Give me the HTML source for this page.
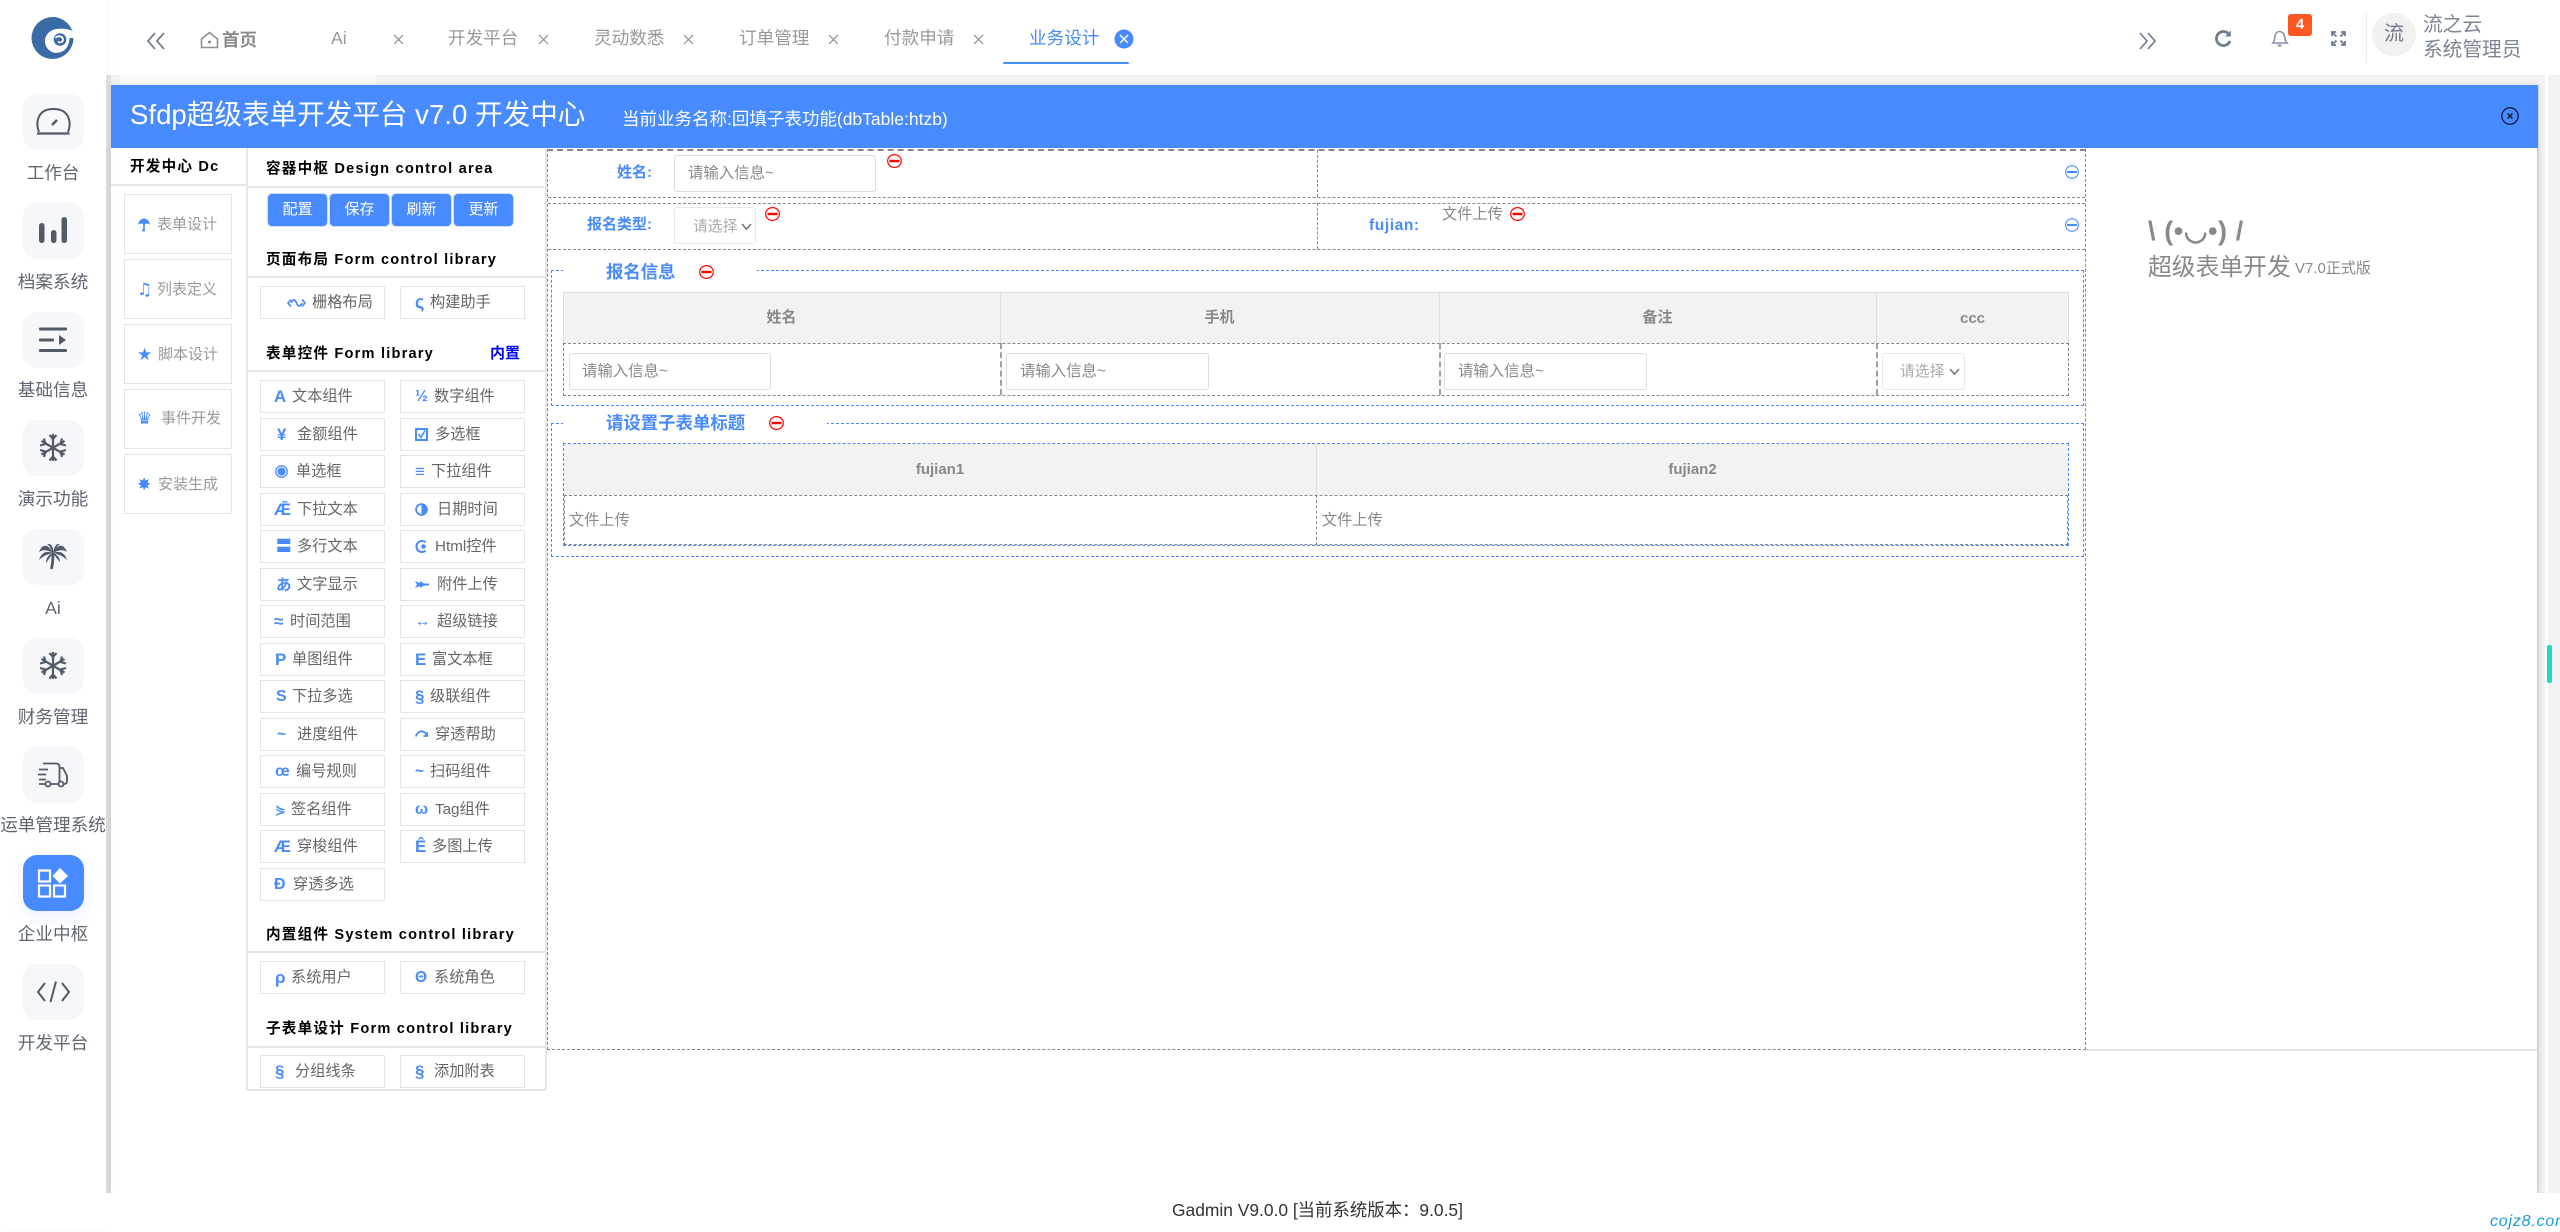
<!DOCTYPE html>
<html lang="zh-CN"><head><meta charset="utf-8"><title>Sfdp</title>
<style>
*{box-sizing:border-box;margin:0;padding:0}
html,body{width:2560px;height:1229px;overflow:hidden;background:#fff;font-family:"Liberation Sans","Noto Sans CJK SC",sans-serif}
.a,.t,.b,svg,.nb,.nl{position:absolute}
.t{white-space:nowrap;line-height:20px}
.nb{left:23px;width:61px;height:56px;border-radius:14px;background:#f5f7fb}
.nb svg{left:0;top:0}
.nl{left:0;width:106px;text-align:center;font-size:17.6px;line-height:22px;color:#5f6672;white-space:nowrap}
.tab{font-size:17.6px;color:#999;top:28px}
.x{stroke:#8a8a8a;stroke-width:1.2;fill:none}
.h{font-size:14.6px;font-weight:700;color:#000;letter-spacing:1.2px}
.l{background:#e6e6e6;height:1.5px}
.b{height:33px;width:125px;border:1px solid #e4e4e4;background:#fff;font-size:15.2px;color:#666;line-height:31px;white-space:nowrap}
.c2{left:400px}.c1{left:260px}
.b i{position:absolute;font-style:normal;font-weight:700;color:#488aff;font-size:15.5px;font-family:"Liberation Sans","DejaVu Sans",sans-serif;top:0}
.b span{position:absolute;top:0}
.s{left:124px;width:108px;height:60px;border:1px solid #e4e4e4;background:#fff}
.st{font-size:15px;color:#999}
.si{color:#488aff;font-size:17px;font-weight:700;font-family:"DejaVu Sans",sans-serif}
.btn{top:193px;width:61px;height:34px;background:#488aff;color:#fff;border:1px solid #cfdcf5;border-radius:5px;font-size:15px;text-align:center;line-height:32px}
.inp{border:1px solid #ddd;border-radius:3px;background:#fff}
.ph{font-size:15.4px;color:#888}
.sel{border:1px solid #e8e8e8;border-radius:3px;background:#fff}
.lbl{font-size:15px;font-weight:700;color:#488aff}
.dash{border:1px dashed #888}
.vd{border:0;border-left:2px dashed #a0a0a0;width:0}
.bd{border:1px dashed #488aff}
.th{background:#f2f2f2}
.tht{font-size:15px;font-weight:700;color:#888;text-align:center}
.lg{font-size:17.4px;font-weight:700;color:#488aff}
.cv{stroke:#777;stroke-width:1.6;fill:none}
.ic{fill:none;stroke:#488aff}
</style></head><body>

<!-- main background -->
<div class="a" style="left:106px;top:75px;width:2454px;height:1118px;background:#f2f2f2"></div>
<div class="a" style="left:106px;top:75px;width:5px;height:1118px;background:#e0e0e0"></div>
<div class="a" style="left:120px;top:75px;width:256px;height:10px;background:#fbfbfb"></div>
<div class="a" style="left:2545px;top:75px;width:3px;height:1118px;background:#fff"></div>
<div class="a" style="left:111px;top:85px;width:2428px;height:1108px;background:#fff;border-right:2px solid #d4d4d4;box-shadow:0 0 6px rgba(0,0,0,.1)"></div>

<!-- sidebar -->
<div class="a" style="left:0;top:0;width:106px;height:1229px;background:#fff;box-shadow:2px 0 10px rgba(0,0,0,.03)"></div>
<svg style="left:31px;top:16px" width="44" height="44" viewBox="0 0 44 44"><circle cx="21.500" cy="22" r="21" fill="#3a6ba6"/><path fill="#fff" d="M26 13C32 12 38 13 44 16V22.500L38.500 22C38.500 30 33.500 37 26 37C19 37 14 31.500 14 25C14 18.500 19.500 13.500 26 13Z"/><path fill="#3a6ba6" d="M41.800 15.600C38 7 30 1 21.500 1L30 9C34 9.500 38.500 11.500 41.800 15.600Z"/><path fill="none" stroke="#3a6ba6" stroke-width="2.600" d="M40.500 22C41 31 34 38 26 38"/><circle cx="29" cy="23.500" r="6.300" fill="#3a6ba6"/><path fill="none" stroke="#fff" stroke-width="1.700" d="M24.500 22C26 19.500 31 19.500 32 23C32.500 26 28.500 27.500 27 25.500"/></svg>

<div class="nb" style="top:94px"><svg width="61" height="56" fill="none" stroke="#515a69" stroke-width="2"><path d="M16 38C12.500 29 14 15 30.500 15C47 15 48.500 29 45 38"/><path d="M14 39.500H46.500" stroke-width="2.200"/><path d="M29 31L34 26" stroke-width="2.600"/></svg></div>
<div class="nl" style="top:162px">工作台</div>
<div class="nb" style="top:202.750px"><svg width="61" height="56" fill="#515a69"><rect x="16" y="20" width="5.500" height="20" rx="2.700"/><rect x="28" y="27" width="5.500" height="13" rx="2.700"/><rect x="38.500" y="14" width="5.500" height="26" rx="2.700"/></svg></div>
<div class="nl" style="top:271px">档案系统</div>
<div class="nb" style="top:311.500px"><svg width="61" height="56" fill="#515a69"><rect x="16" y="15.500" width="28" height="3" rx="1"/><rect x="16" y="26.500" width="15" height="3" rx="1"/><path d="M36 23L43 28L36 33Z"/><rect x="16" y="37" width="28" height="3" rx="1"/></svg></div>
<div class="nl" style="top:379px">基础信息</div>
<div class="nb" style="top:420.250px"><svg width="61" height="56" fill="none" stroke="#515a69" stroke-width="2.200"><path d="M30 14V41M18.500 21L41.500 34.500M18.500 34.500L41.500 21"/><path d="M26.500 15L30 19L33.500 15M26.500 40.500L30 36.500L33.500 40.500M17 25.500L22.500 24L21 18.500M43 30L37.500 31.500L39 37M17 30L22.500 31.500L21 37M43 25.500L37.500 24L39 18.500"/></svg></div>
<div class="nl" style="top:488px">演示功能</div>
<div class="nb" style="top:529px"><svg width="61" height="56" fill="#515a69"><path d="M30 24C25 14 19 15 16 23C20 20 25 21 30 24ZM30 24C23 21 18 24 16 31C20 27 25 25 30 24ZM30 24C31 18 28 14 24 15C27 17 28 20 30 24ZM30 24C31 18 33 14 37 15C34 17 33 20 30 24ZM30 24C35 14 41 15 44 23C40 20 35 21 30 24ZM30 24C37 21 42 24 44 31C40 27 35 25 30 24ZM30 24C26 25 23 29 23 34C26 30 28 27 30 24ZM30 24C34 25 37 29 37 33C34 30 32 27 30 24Z"/><path d="M30 24C30 30 29.500 35 28.500 40" fill="none" stroke="#515a69" stroke-width="2.800"/></svg></div>
<div class="nl" style="top:597px">Ai</div>
<div class="nb" style="top:637.750px"><svg width="61" height="56" fill="none" stroke="#515a69" stroke-width="2.200"><path d="M30 14V41M18.500 21L41.500 34.500M18.500 34.500L41.500 21"/><path d="M26.500 15L30 19L33.500 15M26.500 40.500L30 36.500L33.500 40.500M17 25.500L22.500 24L21 18.500M43 30L37.500 31.500L39 37M17 30L22.500 31.500L21 37M43 25.500L37.500 24L39 18.500"/></svg></div>
<div class="nl" style="top:706px">财务管理</div>
<div class="nb" style="top:746.500px"><svg width="61" height="56" fill="none" stroke="#515a69" stroke-width="1.800"><path d="M20 16.500H33C35.500 16.500 36.500 18 36.500 20V35M36.500 21H40L44 29V34C44 36 43 37 41 37H40M36 37H27M23 37H16M16 22.500H25M15 27.500H23M16 32.500H23"/><circle cx="25" cy="37" r="2.500"/><circle cx="38" cy="37" r="2.500"/></svg></div>
<div class="nl" style="top:814px">运单管理系统</div>
<div class="nb" style="top:855.250px;background:#488aff;box-shadow:0 6px 18px rgba(72,138,255,.12)"><svg width="61" height="56" fill="none" stroke="#fff" stroke-width="2.200"><rect x="16" y="15.500" width="11" height="11"/><rect x="16" y="30.500" width="11" height="11"/><rect x="31" y="30.500" width="11" height="11"/><path fill="#fff" stroke="none" d="M37 13L45 21L37 28.500L29.500 21Z"/></svg></div>
<div class="nl" style="top:923px">企业中枢</div>
<div class="nb" style="top:964px"><svg width="61" height="56" fill="none" stroke="#515a69" stroke-width="2"><path d="M22 19L15 28L22 37M39 19L46 28L39 37M33 17.500L27.500 38"/></svg></div>
<div class="nl" style="top:1032px">开发平台</div>

<!-- top tabs -->
<svg style="left:146px;top:31px" width="20" height="20" fill="none" stroke="#6b7789" stroke-width="1.700"><path d="M9 2L2 10L9 18M18 2L11 10L18 18"/></svg>
<svg style="left:200px;top:31px" width="19" height="18" fill="none" stroke="#8e8e8e" stroke-width="1.600"><path d="M1.500 8L9.500 1.500L17.500 8V16.500H1.500Z"/><circle cx="9.500" cy="11" r="1.500" fill="#8e8e8e" stroke="none"/></svg>
<div class="t" style="left:222px;top:30px;font-size:17.500px;font-weight:700;color:#8a8a8a">首页</div>
<div class="t tab" style="left:331px">Ai</div>
<svg class="x" style="left:393px;top:34px" width="11" height="11"><path d="M1 1L10 10M10 1L1 10"/></svg>
<div class="t tab" style="left:448px">开发平台</div>
<svg class="x" style="left:538px;top:34px" width="11" height="11"><path d="M1 1L10 10M10 1L1 10"/></svg>
<div class="t tab" style="left:594px">灵动数悉</div>
<svg class="x" style="left:683px;top:34px" width="11" height="11"><path d="M1 1L10 10M10 1L1 10"/></svg>
<div class="t tab" style="left:739px">订单管理</div>
<svg class="x" style="left:828px;top:34px" width="11" height="11"><path d="M1 1L10 10M10 1L1 10"/></svg>
<div class="t tab" style="left:884px">付款申请</div>
<svg class="x" style="left:973px;top:34px" width="11" height="11"><path d="M1 1L10 10M10 1L1 10"/></svg>
<div class="t tab" style="left:1029px;color:#488aff">业务设计</div>
<svg style="left:1114px;top:29px" width="20" height="20"><circle cx="10" cy="10" r="9.500" fill="#488aff"/><path d="M6 6L14 14M14 6L6 14" stroke="#fff" stroke-width="1.400"/></svg>
<div class="a" style="left:1003px;top:62px;width:126px;height:2px;background:#488aff;border-radius:1px"></div>

<svg style="left:2138px;top:31px" width="20" height="20" fill="none" stroke="#6b7f99" stroke-width="1.700"><path d="M2 2L9 10L2 18M10 2L17 10L10 18"/></svg>
<svg style="left:2214px;top:29px" width="19" height="19" fill="none" stroke="#6e7d92" stroke-width="2.800"><path d="M15.500 6A7 7 0 1 0 16 12"/><path d="M16.800 1.500V7.500H11" fill="#6e7d92" stroke="none"/></svg>
<svg style="left:2271px;top:29px" width="18" height="19" fill="none" stroke="#8494aa" stroke-width="1.600"><path d="M2 14C4 12 3.500 9 4 7C4.500 4 6.500 2.500 8.500 2.500C10.500 2.500 13 4 13.500 7C14 9 14 12 16 14Z"/><path d="M6.500 16.500H10.500" stroke-width="2"/></svg>
<div class="a" style="left:2288px;top:14px;width:24px;height:22px;background:#ff5722;border-radius:3px;color:#fff;font-weight:700;font-size:15px;text-align:center;line-height:22px">4</div>
<svg style="left:2331px;top:31px" width="15" height="15" fill="none" stroke="#6b7a8e" stroke-width="1.800"><path d="M1 5V1H5M10 1H14V5M1 10V14H5M10 14H14V10M1.500 1.500L5.500 5.500M13.500 1.500L9.500 5.500M1.500 13.500L5.500 9.500M13.500 13.500L9.500 9.500"/></svg>
<div class="a" style="left:2366px;top:13px;width:1px;height:50px;background:#ececec"></div>
<div class="a" style="left:2372px;top:13px;width:44px;height:43px;border-radius:50%;background:#f1f1f1;color:#6c7a8e;font-size:20px;text-align:center;line-height:42px">流</div>
<div class="t" style="left:2423px;top:15px;font-size:19.700px;color:#7b8695">流之云</div>
<div class="t" style="left:2423px;top:40px;font-size:19.700px;color:#7b8695">系统管理员</div>

<!-- dialog header -->
<div class="a" style="left:111px;top:85px;width:2427px;height:63px;background:#488aff"></div>
<div class="t" style="left:130px;top:105px;font-size:27.600px;color:#fff">Sfdp超级表单开发平台 v7.0 开发中心</div>
<div class="t" style="left:622px;top:109px;font-size:17.500px;color:#fff">当前业务名称:回填子表功能(dbTable:htzb)</div>
<svg style="left:2501px;top:107px" width="18" height="18" fill="none" stroke="#0f1c33" stroke-width="1.300"><circle cx="9" cy="9" r="8.200"/><path d="M6.500 6.500L11.500 11.500M11.500 6.500L6.500 11.500" stroke-width="1.500"/></svg>

<!-- left col -->
<div class="t h" style="left:130px;top:157px">开发中心 Dc</div>
<div class="a l" style="left:111px;top:184px;width:135px"></div>
<div class="a" style="left:246px;top:148px;width:1.500px;height:942px;background:#e6e6e6"></div>
<div class="a s" style="top:194px"></div>
<svg style="left:138px;top:218px" width="12" height="14"><path d="M0 6.500C1 2 4 .5 6 .5C8 .5 11 2 12 6.500C10 5.500 8 5.500 6 6C4 5.500 2 5.500 0 6.500Z" fill="#488aff"/><path d="M6 5V12.500H4" fill="none" stroke="#488aff" stroke-width="1.700"/></svg>
<span class="t st" style="left:157px;top:215px">表单设计</span>
<div class="a s" style="top:259px"></div><span class="t si" style="left:137px;top:280px">♫</span><span class="t st" style="left:157px;top:280px">列表定义</span>
<div class="a s" style="top:324px"></div><span class="t si" style="left:137px;top:345px">★</span><span class="t st" style="left:158px;top:345px">脚本设计</span>
<div class="a s" style="top:389px"></div><span class="t si" style="left:137px;top:409px">♛</span><span class="t st" style="left:161px;top:409px">事件开发</span>
<div class="a s" style="top:454px"></div><span class="t si" style="left:137px;top:475px">✸</span><span class="t st" style="left:158px;top:475px">安装生成</span>

<!-- middle col -->
<div class="a" style="left:545px;top:148px;width:1.500px;height:942px;background:#e6e6e6"></div>
<div class="a" style="left:246px;top:1089px;width:300px;height:1.500px;background:#e6e6e6"></div>
<div class="t h" style="left:266px;top:159px">容器中枢 Design control area</div>
<div class="a l" style="left:247px;top:186px;width:298px"></div>
<div class="a btn" style="left:267px">配置</div><div class="a btn" style="left:329px">保存</div><div class="a btn" style="left:391px">刷新</div><div class="a btn" style="left:453px">更新</div>
<div class="t h" style="left:266px;top:250px">页面布局 Form control library</div>
<div class="a l" style="left:247px;top:276px;width:298px"></div>
<div class="b c1" style="top:286px"><svg class="ic" style="left:26px;top:11px" width="19" height="10" stroke-width="1.700"><path d="M4 1.500L1 5L4 8.500M15 1.500L18 5L15 8.500M4 5C6 1 8 1 9.500 5C11 9 13 9 15 5"/></svg><span style="left:51px">栅格布局</span></div>
<div class="b c2" style="top:286px"><i style="left:14px;font-size:18px">ς</i><span style="left:29px">构建助手</span></div>
<div class="t h" style="left:266px;top:344px">表单控件 Form library</div>
<div class="t" style="left:490px;top:344px;font-size:15px;font-weight:700;color:#0000ff">内置</div>
<div class="a l" style="left:247px;top:370px;width:298px"></div>

<div class="b c1" style="top:380px"><i style="left:13px;font-size:17px">A</i><span style="left:31px">文本组件</span></div>
<div class="b c2" style="top:380px"><i style="left:14px">½</i><span style="left:33px">数字组件</span></div>
<div class="b c1" style="top:417.500px"><i style="left:16px;font-size:17px">¥</i><span style="left:36px">金额组件</span></div>
<div class="b c2" style="top:417.500px"><svg class="ic" style="left:14px;top:9px" width="13" height="13" stroke-width="2"><rect x="1" y="1" width="11" height="11"/><path d="M3.500 6L6 9.500L10 2.500" stroke-width="1.600"/></svg><span style="left:34px">多选框</span></div>
<div class="b c1" style="top:455px"><svg style="left:14px;top:9px" width="13" height="13"><circle cx="6.500" cy="6.500" r="5.700" fill="none" stroke="#488aff" stroke-width="1.300"/><circle cx="6.500" cy="6.500" r="4" fill="#488aff"/></svg><span style="left:35px">单选框</span></div>
<div class="b c2" style="top:455px"><i style="left:14px;font-size:17px">≡</i><span style="left:30px">下拉组件</span></div>
<div class="b c1" style="top:492.500px"><i style="left:13px;font-size:17px">Ǣ</i><span style="left:36px">下拉文本</span></div>
<div class="b c2" style="top:492.500px"><svg style="left:14px;top:9px" width="13" height="13"><circle cx="6.500" cy="6.500" r="5.400" fill="#fff" stroke="#488aff" stroke-width="1.800"/><path d="M6.500 1A5.500 5.500 0 0 1 6.500 12Z" fill="#488aff"/></svg><span style="left:36px">日期时间</span></div>
<div class="b c1" style="top:530px"><i style="left:15px">〓</i><span style="left:36px">多行文本</span></div>
<div class="b c2" style="top:530px"><svg style="left:14px;top:9px" width="13" height="13"><path d="M10.500 2.300A5.500 5.500 0 1 0 10.500 10.700" fill="none" stroke="#488aff" stroke-width="2"/><circle cx="8.500" cy="6.500" r="2.300" fill="#488aff"/></svg><span style="left:34px">Html控件</span></div>
<div class="b c1" style="top:567.500px"><i style="left:15px;font-family:'Noto Sans CJK JP',sans-serif">あ</i><span style="left:36px">文字显示</span></div>
<div class="b c2" style="top:567.500px"><svg style="left:14px;top:11px" width="14" height="9"><path d="M0 1L5 3V1L9 3.500H14L14 5.500H9L5 8V6L0 8L2 4.500Z" fill="#488aff"/></svg><span style="left:36px">附件上传</span></div>
<div class="b c1" style="top:605px"><i style="left:13px;font-size:17px">≈</i><span style="left:29px">时间范围</span></div>
<div class="b c2" style="top:605px"><i style="left:14px;font-weight:400">↔</i><span style="left:36px">超级链接</span></div>
<div class="b c1" style="top:642.500px"><i style="left:14px;font-size:17px">P</i><span style="left:31px">单图组件</span></div>
<div class="b c2" style="top:642.500px"><i style="left:14px;font-size:17px">E</i><span style="left:31px">富文本框</span></div>
<div class="b c1" style="top:680px"><i style="left:15px;font-size:16px">S</i><span style="left:31px">下拉多选</span></div>
<div class="b c2" style="top:680px"><i style="left:14px;font-size:17px">§</i><span style="left:29px">级联组件</span></div>
<div class="b c1" style="top:717.500px"><i style="left:16px">~</i><span style="left:36px">进度组件</span></div>
<div class="b c2" style="top:717.500px"><svg class="ic" style="left:14px;top:10px" width="13" height="9" stroke-width="1.800"><path d="M1 7.500C2 2 9 0 11.500 6M12.500 3V7H8.500"/></svg><span style="left:34px">穿透帮助</span></div>
<div class="b c1" style="top:755px"><i style="left:14px">œ</i><span style="left:35px">编号规则</span></div>
<div class="b c2" style="top:755px"><i style="left:14px">~</i><span style="left:29px">扫码组件</span></div>
<div class="b c1" style="top:792.500px"><i style="left:14px;font-size:13px">⋟</i><span style="left:30px">签名组件</span></div>
<div class="b c2" style="top:792.500px"><i style="left:14px">ω</i><span style="left:34px">Tag组件</span></div>
<div class="b c1" style="top:830px"><i style="left:13px;font-size:17px">Æ</i><span style="left:36px">穿梭组件</span></div>
<div class="b c2" style="top:830px"><i style="left:14px;font-size:17px">Ê</i><span style="left:31px">多图上传</span></div>
<div class="b c1" style="top:867.500px"><i style="left:13px;font-size:16px">Đ</i><span style="left:32px">穿透多选</span></div>

<div class="t h" style="left:266px;top:925px">内置组件 System control library</div>
<div class="a l" style="left:247px;top:951px;width:298px"></div>
<div class="b c1" style="top:961px"><i style="left:14px;font-size:17px">ρ</i><span style="left:30px">系统用户</span></div>
<div class="b c2" style="top:961px"><i style="left:14px">Θ</i><span style="left:33px">系统角色</span></div>
<div class="t h" style="left:266px;top:1019px">子表单设计 Form control library</div>
<div class="a l" style="left:247px;top:1046px;width:298px"></div>
<div class="b c1" style="top:1055px"><i style="left:14px;font-size:17px">§</i><span style="left:34px">分组线条</span></div>
<div class="b c2" style="top:1055px"><i style="left:14px;font-size:17px">§</i><span style="left:33px">添加附表</span></div>

<!-- design area -->
<div class="a dash" style="left:547px;top:149px;width:1539px;height:901px;border-top:2px dashed #888"></div>
<div class="a dash" style="left:548px;top:197px;width:1537px;height:0;border-width:1px 0 0"></div>
<div class="a dash" style="left:548px;top:203px;width:1537px;height:0;border-width:1px 0 0"></div>
<div class="a dash" style="left:548px;top:249px;width:1537px;height:0;border-width:1px 0 0"></div>
<div class="a dash" style="left:1317px;top:150px;width:0;height:47px;border-width:0 0 0 1px"></div>
<div class="a dash" style="left:1317px;top:203px;width:0;height:46px;border-width:0 0 0 1px"></div>

<div class="t lbl" style="left:617px;top:163px">姓名:</div>
<div class="a inp" style="left:674px;top:155px;width:202px;height:37px"></div>
<div class="t ph" style="left:688px;top:164px">请输入信息~</div>
<svg style="left:887px;top:154px" width="15" height="14"><ellipse cx="7.500" cy="7" rx="6.800" ry="6.400" fill="#fff" stroke="#f00" stroke-width="1.200"/><rect x="2.500" y="5.800" width="10" height="2.400" fill="#f00"/></svg>
<svg style="left:2065px;top:165px" width="14" height="14"><ellipse cx="7" cy="7" rx="6.300" ry="6.300" fill="#fff" stroke="#488aff" stroke-width="1.100"/><rect x="2" y="6" width="10" height="2" fill="#488aff"/></svg>

<div class="t lbl" style="left:587px;top:215px">报名类型:</div>
<div class="a sel" style="left:674px;top:207px;width:82px;height:37px"></div>
<div class="t" style="left:693px;top:217px;font-size:14.800px;color:#aaa">请选择</div>
<svg class="cv" style="left:741px;top:222px" width="11" height="9"><path d="M1 2L5.500 7L10 2"/></svg>
<svg style="left:765px;top:207px" width="15" height="14"><ellipse cx="7.500" cy="7" rx="6.800" ry="6.400" fill="#fff" stroke="#f00" stroke-width="1.200"/><rect x="2.500" y="5.800" width="10" height="2.400" fill="#f00"/></svg>
<div class="t lbl" style="left:1369px;top:216px;font-size:15.500px;letter-spacing:.6px">fujian:</div>
<div class="t" style="left:1442px;top:205px;font-size:15.200px;color:#888">文件上传</div>
<svg style="left:1510px;top:207px" width="15" height="14"><ellipse cx="7.500" cy="7" rx="6.800" ry="6.400" fill="#fff" stroke="#f00" stroke-width="1.200"/><rect x="2.500" y="5.800" width="10" height="2.400" fill="#f00"/></svg>
<svg style="left:2065px;top:218px" width="14" height="14"><ellipse cx="7" cy="7" rx="6.300" ry="6.300" fill="#fff" stroke="#488aff" stroke-width="1.100"/><rect x="2" y="6" width="10" height="2" fill="#488aff"/></svg>

<!-- fieldset 1 -->
<div class="a bd" style="left:551px;top:270px;width:1533px;height:136px"></div>
<div class="a" style="left:563px;top:262px;width:194px;height:16px;background:#fff"></div>
<div class="t lg" style="left:606px;top:262px">报名信息</div>
<svg style="left:699px;top:265px" width="15" height="14"><ellipse cx="7.500" cy="7" rx="6.800" ry="6.400" fill="#fff" stroke="#f00" stroke-width="1.200"/><rect x="2.500" y="5.800" width="10" height="2.400" fill="#f00"/></svg>
<div class="a th" style="left:563px;top:292px;width:1506px;height:51px;border:1px solid #ddd;border-bottom:0"></div>
<div class="a" style="left:1000px;top:292px;width:1px;height:51px;background:#ddd"></div>
<div class="a" style="left:1439px;top:292px;width:1px;height:51px;background:#ddd"></div>
<div class="a" style="left:1876px;top:292px;width:1px;height:51px;background:#ddd"></div>
<div class="a t tht" style="left:563px;width:437px;top:308px">姓名</div>
<div class="a t tht" style="left:1000px;width:439px;top:308px">手机</div>
<div class="a t tht" style="left:1439px;width:437px;top:308px">备注</div>
<div class="a t tht" style="left:1876px;width:193px;top:309px">ccc</div>
<div class="a dash" style="left:563px;top:343px;width:1506px;height:53px"></div>
<div class="a vd" style="left:1000px;top:343px;height:52px"></div>
<div class="a vd" style="left:1439px;top:343px;height:52px"></div>
<div class="a vd" style="left:1876px;top:343px;height:52px"></div>
<div class="a inp" style="left:569px;top:353px;width:202px;height:37px"></div><div class="t ph" style="left:582px;top:362px">请输入信息~</div>
<div class="a inp" style="left:1006px;top:353px;width:203px;height:37px"></div><div class="t ph" style="left:1020px;top:362px">请输入信息~</div>
<div class="a inp" style="left:1444px;top:353px;width:203px;height:37px"></div><div class="t ph" style="left:1458px;top:362px">请输入信息~</div>
<div class="a sel" style="left:1882px;top:353px;width:83px;height:37px"></div><div class="t" style="left:1900px;top:362px;font-size:14.800px;color:#aaa">请选择</div>
<svg class="cv" style="left:1949px;top:367px" width="11" height="9"><path d="M1 2L5.500 7L10 2"/></svg>

<!-- fieldset 2 -->
<div class="a bd" style="left:551px;top:423px;width:1533px;height:134px"></div>
<div class="a" style="left:563px;top:415px;width:264px;height:16px;background:#fff"></div>
<div class="t lg" style="left:606px;top:413px">请设置子表单标题</div>
<svg style="left:769px;top:416px" width="15" height="14"><ellipse cx="7.500" cy="7" rx="6.800" ry="6.400" fill="#fff" stroke="#f00" stroke-width="1.200"/><rect x="2.500" y="5.800" width="10" height="2.400" fill="#f00"/></svg>
<div class="a th" style="left:564px;top:444px;width:1504px;height:51px"></div>
<div class="a" style="left:1316px;top:444px;width:1px;height:51px;background:#ddd"></div>
<div class="a dash" style="left:564px;top:495px;width:1504px;height:50px"></div>
<div class="a dash" style="left:1316px;top:495px;width:0;height:50px;border-width:0 0 0 1px"></div>
<div class="a bd" style="left:563px;top:443px;width:1506px;height:103px"></div>
<div class="a t tht" style="left:564px;width:752px;top:460px">fujian1</div>
<div class="a t tht" style="left:1317px;width:751px;top:460px">fujian2</div>
<div class="t" style="left:569px;top:511px;font-size:15.200px;color:#888">文件上传</div>
<div class="t" style="left:1322px;top:511px;font-size:15.200px;color:#888">文件上传</div>

<!-- right info -->
<div class="t" style="left:2148px;top:217px;font-size:27px;line-height:28px;font-weight:700;color:#888;letter-spacing:.6px">\ (•◡•) /</div>
<div class="t" style="left:2148px;top:256px;font-size:23.800px;line-height:24px;color:#888">超级表单开发</div>
<div class="t" style="left:2295px;top:259px;font-size:15px;color:#888">V7.0正式版</div>
<div class="a" style="left:2086px;top:1049px;width:451px;height:1.500px;background:#e6e6e6"></div>

<!-- scroll marker -->
<div class="a" style="left:2547px;top:645px;width:5px;height:38px;background:#1cdcc0;border-radius:2px"></div>

<!-- footer -->
<div class="a" style="left:0;top:1193px;width:2560px;height:36px;background:#fff"></div>
<div class="t" style="left:1172px;top:1200px;font-size:17.400px;color:#333">Gadmin V9.0.0 [当前系统版本：9.0.5]</div>
<div class="t" style="left:2490px;top:1212px;font-size:16px;font-style:italic;color:#1a9bd7;letter-spacing:.8px">cojz8.com</div>

</body></html>
